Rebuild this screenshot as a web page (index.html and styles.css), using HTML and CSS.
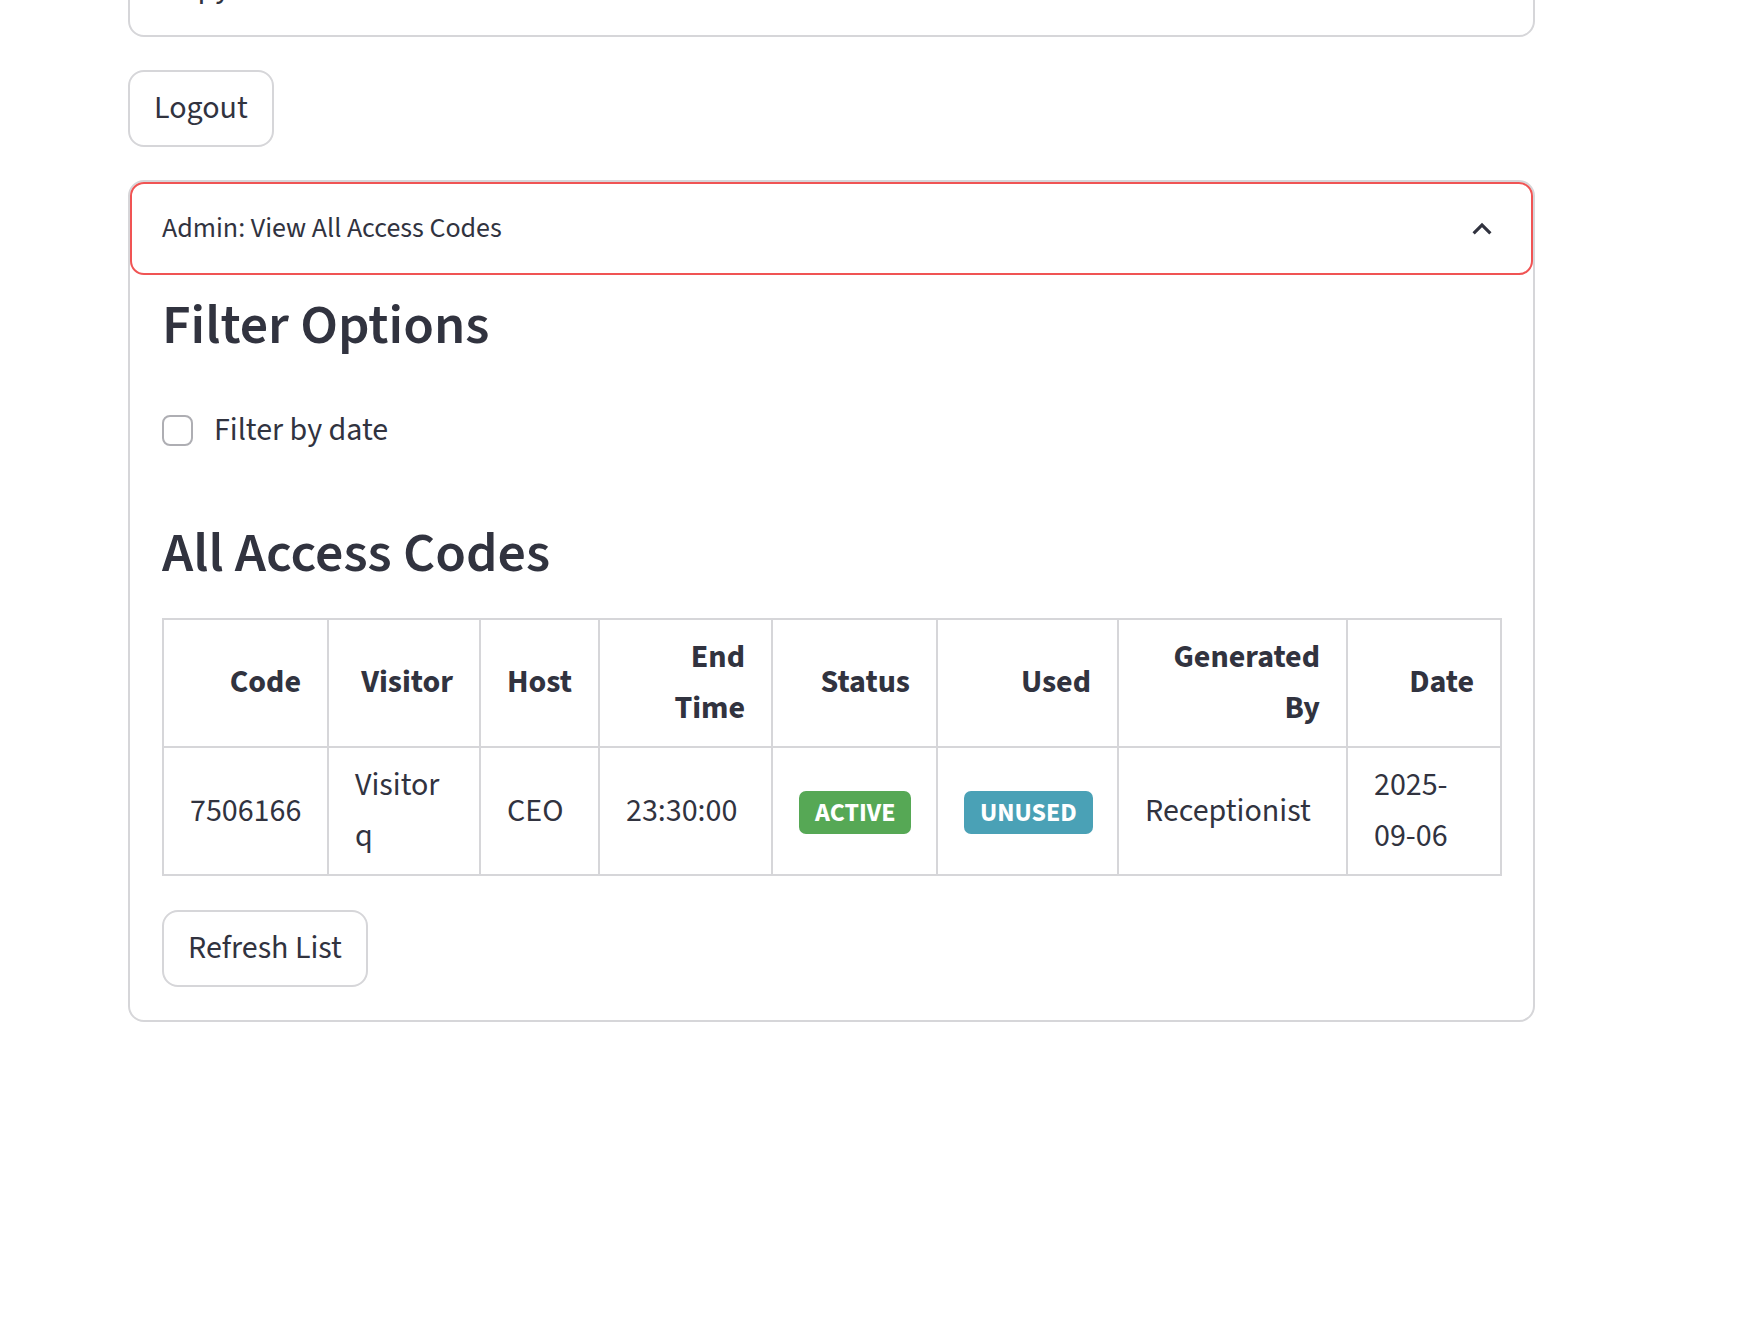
FILE: index.html
```html
<!DOCTYPE html>
<html lang="en">
<head>
<meta charset="utf-8">
<title>Access Codes</title>
<link rel="stylesheet" href="styles.css">
</head>
<body>
<main class="page">
  <section class="card">
    <p class="card-text">Copy this code</p>
  </section>

  <button class="btn btn-logout" type="button">Logout</button>

  <section class="expander">
    <div class="expander-header">
      <span class="expander-label">Admin: View All Access Codes</span>
      <svg class="chevron" viewBox="0 0 24 24" aria-hidden="true"><path d="M12 8l-6 6 1.41 1.41L12 10.83l4.59 4.58L18 14z"/></svg>
    </div>
    <div class="expander-body">
      <h3 class="heading heading-filter">Filter Options</h3>
      <label class="checkbox-row">
        <span class="checkbox"></span>
        <span class="checkbox-label">Filter by date</span>
      </label>
      <h3 class="heading heading-codes">All Access Codes</h3>
      <table class="codes">
        <colgroup>
          <col class="c-code"><col class="c-visitor"><col class="c-host"><col class="c-end">
          <col class="c-status"><col class="c-used"><col class="c-gen"><col class="c-date">
        </colgroup>
        <thead>
          <tr>
            <th>Code</th><th>Visitor</th><th>Host</th><th>End Time</th>
            <th>Status</th><th>Used</th><th>Generated By</th><th>Date</th>
          </tr>
        </thead>
        <tbody>
          <tr>
            <td class="nowrap">7506166</td>
            <td>Visitor q</td>
            <td>CEO</td>
            <td class="nowrap">23:30:00</td>
            <td><span class="badge badge-active">ACTIVE</span></td>
            <td><span class="badge badge-unused">UNUSED</span></td>
            <td class="nowrap">Receptionist</td>
            <td>2025-09-06</td>
          </tr>
        </tbody>
      </table>
      <button class="btn btn-refresh" type="button">Refresh List</button>
    </div>
  </section>
</main>
</body>
</html>
```
FILE: styles.css
```css
html, body {
  margin: 0;
  padding: 0;
  background: #ffffff;
}

body {
  font-family: "Source Sans Pro", "Source Sans 3", Lato, "Noto Sans", sans-serif;
  color: #31333f;
  font-size: 32px;
  line-height: 1.6;
  overflow: hidden;
}

.page {
  display: flex;
  flex-direction: column;
  align-items: flex-start;
  width: 1407px;
  padding-left: 128px;
}

.card {
  align-self: stretch;
  margin-top: -40px;
  border: 2px solid #d6d6d9;
  border-radius: 16px;
  padding: 0 32px 22px;
}

.card-text {
  margin: 0;
}

.btn {
  font-family: inherit;
  font-size: 32px;
  line-height: 51px;
  color: #31333f;
  background: #ffffff;
  border: 2px solid #d6d6d9;
  border-radius: 16px;
  padding: 11px 24px;
  cursor: pointer;
}

.btn-logout {
  margin-top: 33px;
}

.expander {
  align-self: stretch;
  margin-top: 33px;
  border: 2px solid #d6d6d9;
  border-radius: 16px;
}

.expander-header {
  display: flex;
  align-items: center;
  justify-content: space-between;
  border: 2px solid #f05454;
  border-radius: 14px;
  padding: 22px 30px;
}

.expander-label {
  font-size: 28px;
  line-height: 44.8px;
}

.chevron {
  width: 38px;
  height: 38px;
  fill: #31333f;
}

.expander-body {
  display: flex;
  flex-direction: column;
  align-items: flex-start;
  padding: 0 32px 33px;
}

.heading {
  margin: 0;
  font-size: 56px;
  line-height: 1.2;
  font-weight: 600;
}

.heading-filter {
  margin-top: 17px;
}

.checkbox-row {
  display: flex;
  align-items: center;
  gap: 20px;
  margin-top: 46px;
}

.checkbox {
  width: 31px;
  height: 31px;
  box-sizing: border-box;
  border: 2px solid #aeaeb3;
  border-radius: 8px;
}

.checkbox-label {
  padding-left: 1px;
}

.heading-codes {
  margin-top: 64px;
}

.codes {
  margin-top: 30px;
  border-collapse: collapse;
  table-layout: fixed;
  width: 1340px;
}

.c-code { width: 165px; }
.c-visitor { width: 152px; }
.c-host { width: 119px; }
.c-end { width: 173px; }
.c-status { width: 165px; }
.c-used { width: 181px; }
.c-gen { width: 229px; }
.c-date { width: 154px; }

.codes th,
.codes td {
  border: 2px solid #d6d6d9;
  padding: 12px 24px;
  vertical-align: middle;
  line-height: 51.2px;
}

.codes th {
  text-align: right;
  font-weight: 700;
  padding-right: 26px;
}

.codes td {
  text-align: left;
  padding-left: 26px;
}

.nowrap {
  white-space: nowrap;
}

.badge {
  display: inline-block;
  font-size: 26px;
  line-height: 31px;
  font-weight: 700;
  color: #ffffff;
  padding: 6px 16px;
  border-radius: 7px;
  vertical-align: middle;
}

.badge-active {
  background: #56a855;
}

.badge-unused {
  background: #4aa1b6;
}

.btn-refresh {
  margin-top: 34px;
}
```
